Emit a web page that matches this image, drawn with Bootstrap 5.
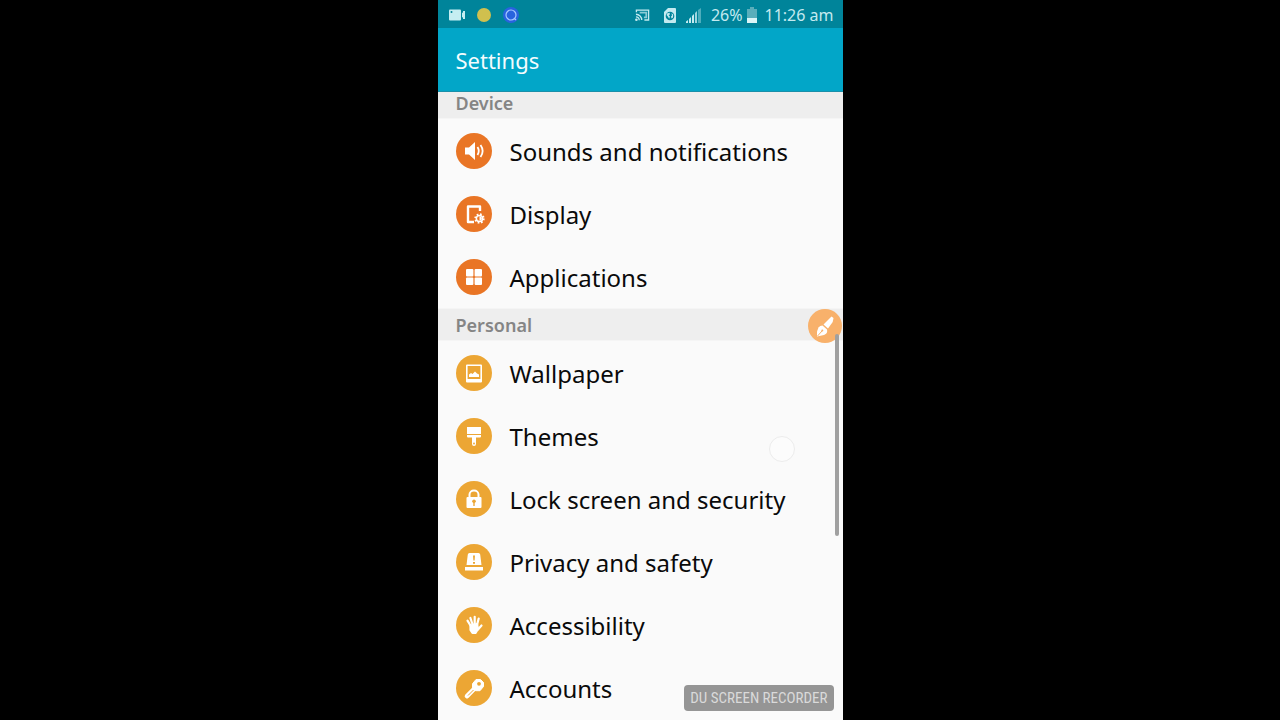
<!DOCTYPE html>
<html lang="en">
<head>
<meta charset="utf-8">
<meta name="viewport" content="width=device-width, initial-scale=1">
<title>Settings</title>
<link href="https://cdn.jsdelivr.net/npm/bootstrap@5.3.0/dist/css/bootstrap.min.css" rel="stylesheet">
<style>
  body { background: #000; font-family: "Noto Sans", "Open Sans", sans-serif; }
  .phone { height: 100vh; aspect-ratio: 9 / 16; max-width: 100%; background: #fafafa; }
  .status-bar { height: 28px; background: #00849a; color: #c4eaf0; font-size: 16px; line-height: 28px; padding: 2px 9px 0 10px; }
  .status-bar svg { flex: none; }
  .system-icons { gap: 10px; }
  .title-bar { height: 64px; background: #02a6c8; border-bottom: 1px solid #1a90aa; padding: 0 18px; }
  .title-bar h1 { font-size: 22px; line-height: 28px; color: #f4fcfe; font-weight: 400; }
  .section-title { height: 33px; background: #eee; border: solid #f5f5f5; border-width: 1px 0; color: #858585; font-size: 18px; line-height: 32px; font-weight: 600; padding: 0 18px; margin: 0; }
  .section-title.scrolled { height: 27px; line-height: 22px; border-top: 0; }
  .setting { height: 63px; gap: 18px; padding: 0 18px; color: #0a0a0a; font-size: 24px; line-height: 32px; background: transparent; }
  .setting span { padding-top: 2px; }
  .setting svg { flex: none; width: 36px; height: 36px; border-radius: 50%; background: #eca634; color: #eca634; }
  .device .setting svg { background: #e97525; color: #e97525; }
  .brush-button { top: 309px; right: 1px; width: 34px; height: 34px; background: #f8b16b; }
  .scroll-thumb { top: 334px; right: 4px; width: 4px; height: 202px; border-radius: 2px; background: #a0a0a0; }
  .touch-dot { top: 436px; right: 48px; width: 26px; height: 26px; border: 1px solid #ececec; background: #fcfcfc; }
  .recorder-tag { right: 9px; bottom: 9px; height: 26px; border-radius: 4px; background: #959595; color: #dadada; font: 15px/27px "Roboto Condensed", "Liberation Sans Narrow", sans-serif; padding: 0 6px; }
</style>
</head>
<body>
<main class="phone position-relative mx-auto overflow-hidden">
  <div class="status-bar d-flex align-items-center">
    <svg width="18" height="14" viewBox="0 0 18 14" fill="#c6eef2"><rect x="1" y="1.500" width="12" height="11" rx="1"/><path d="M14 5l1.500-1v6L14 9zM15 3h2v8h-2z"/><circle cx="3.500" cy="4" r="1" fill="#00849a"/></svg>
    <svg class="ms-2" width="20" height="16" viewBox="0 0 20 16"><circle cx="10" cy="8" r="7" fill="#d0c04e"/></svg>
    <svg class="ms-2" width="18" height="18" viewBox="0 0 18 18"><circle cx="9" cy="9" r="8" fill="#2863de"/><circle cx="9" cy="9" r="5" fill="none" stroke="#a5c8ff" stroke-width="1.2"/><path d="M12.2 12.2l1.8 1.8" stroke="#a5c8ff" stroke-width="1.3"/></svg>
    <div class="system-icons ms-auto d-flex align-items-center">
      <svg class="me-1" width="15" height="14" viewBox="0 0 16 14" fill="none" stroke="#c4eaf0" stroke-width="1.4"><path d="M1.500 4V1.700h13v10.600H10"/><path d="M1 6.200a6.200 6.200 0 0 1 6.200 6.200M1 9a3.500 3.500 0 0 1 3.500 3.500"/><path d="M5 4.500h7v5H9.500" stroke-width="1.800" opacity=".7"/><circle cx="1.500" cy="12" r=".7" fill="#c4eaf0"/></svg>
      <svg width="12" height="15" viewBox="0 0 12 15"><path d="M4 0h7a1 1 0 0 1 1 1v13a1 1 0 0 1-1 1H1a1 1 0 0 1-1-1V4z" fill="#c4eaf0"/><circle cx="6" cy="8" r="4.300" fill="#00849a"/><path d="M3 5.500l2.500-.8.5 1.500-1.300 1 1.300 1.300-.8 2.200-1.200-2L2.600 7zM7.500 5.200l1.700 1.200-.2 3-1.500 1-.5-2 1-1z" fill="#c4eaf0"/></svg>
      <svg width="15" height="15" viewBox="0 0 15 15" fill="#c4eaf0"><path d="M0 13.500L2 12v3H0zM3 11L5 9v6H3zM6 8l2-2v9H6z"/><path d="M9 5l2-2v12H9z" opacity=".8"/><path d="M12 2l3-2v15h-3z" opacity=".4"/></svg>
      <span>26%</span>
    </div>
    <svg class="ms-1" width="10" height="16" viewBox="0 0 10 16"><path d="M3 0h4v2h3v14H0V2h3z" fill="#5aaebb"/><path d="M0 11h10v5H0z" fill="#dcf5f7"/></svg>
    <time class="ms-2">11:26 am</time>
  </div>

  <header class="title-bar d-flex align-items-center"><h1 class="m-0">Settings</h1></header>

  <section class="device">
    <h2 class="section-title scrolled">Device</h2>
    <nav class="list-group list-group-flush">
      <a href="#sounds" class="setting d-flex align-items-center text-decoration-none">
        <svg viewBox="0 0 36 36" fill="#fff"><path d="M9 14.500h4l6-5.500v18l-6-5.500H9z"/><path d="M21.500 14q2.500 4 0 8M24.500 12q4.300 6 0 12" fill="none" stroke="#fff" stroke-width="1.800"/></svg>
        <span>Sounds and notifications</span></a>
      <a href="#display" class="setting d-flex align-items-center text-decoration-none">
        <svg viewBox="0 0 36 36" fill="none"><path d="M24 15v-4.500H12V26h6" stroke="#fff" stroke-width="2.400" stroke-linejoin="round"/><circle cx="23.500" cy="22.500" r="4.200" stroke="#fff" stroke-width="2" stroke-dasharray="1.650"/><circle cx="23.500" cy="22.500" r="3.100" stroke="#fff" stroke-width="1.500"/><path d="M23.500 20.200a2.300 2.300 0 0 1 0 4.600z" fill="#fff"/></svg>
        <span>Display</span></a>
      <a href="#applications" class="setting d-flex align-items-center text-decoration-none">
        <svg viewBox="0 0 36 36" fill="#fff"><rect x="10" y="10" width="7.400" height="7.400" rx="1"/><rect x="18.600" y="10" width="7.400" height="7.400" rx="1"/><rect x="10" y="18.600" width="7.400" height="7.400" rx="1"/><rect x="18.600" y="18.600" width="7.400" height="7.400" rx="1"/></svg>
        <span>Applications</span></a>
    </nav>
  </section>

  <section>
    <h2 class="section-title">Personal</h2>
    <nav class="list-group list-group-flush">
      <a href="#wallpaper" class="setting d-flex align-items-center text-decoration-none">
        <svg viewBox="0 0 36 36" fill="#fff"><path fill-rule="evenodd" d="M11 9.500h14q1 0 1 1v16q0 1-1 1H11q-1 0-1-1v-16q0-1 1-1zm.6 1.600v13h12.800v-13z"/><path d="M13 22v-2.500l2-1.500 1.500 1 2.500-2.500 2 2 2 1V22z"/></svg>
        <span>Wallpaper</span></a>
      <a href="#themes" class="setting d-flex align-items-center text-decoration-none">
        <svg viewBox="0 0 36 36" fill="#fff"><path d="M11 9h14v7H11zM11 17h14v1.500q0 1-1 1h-4V26q0 2-2 2t-2-2v-6.500h-4q-1 0-1-1z"/><circle cx="18" cy="25.500" r=".9" fill="currentColor"/></svg>
        <span>Themes</span></a>
      <a href="#security" class="setting d-flex align-items-center text-decoration-none">
        <svg viewBox="0 0 36 36"><rect x="10.500" y="16" width="15" height="11" rx="1" fill="#fff"/><path d="M13.500 17v-3.500a4.500 4 0 0 1 9 0V17" fill="none" stroke="#fff" stroke-width="2"/><circle cx="18" cy="20.300" r="1.800" fill="currentColor"/><path d="M17.300 21h1.400v4h-1.400z" fill="currentColor"/></svg>
        <span>Lock screen and security</span></a>
      <a href="#privacy" class="setting d-flex align-items-center text-decoration-none">
        <svg viewBox="0 0 36 36" fill="#fff"><path d="M13.500 9h9q1.500 0 1.700 1.500L25.500 21h-15l1.300-10.500Q12 9 13.500 9zM9 23h18v3.500H9z"/><path d="M17 11.500h2l-.4 5h-1.200zM17 18h2v1.800h-2z" fill="currentColor"/></svg>
        <span>Privacy and safety</span></a>
      <a href="#accessibility" class="setting d-flex align-items-center text-decoration-none">
        <svg viewBox="0 0 36 36" fill="none" stroke="#fff" stroke-width="2.200" stroke-linecap="round"><path d="M14.800 19l-3.300-5.300M16.400 17l-2-6M18.700 17V9.800M21 18l1.700-6.500M22 22.500l3.500-4"/><path d="M14.500 18.500l6.500-1.500 1 5-2.500 4h-3l-2-3z" fill="#fff" stroke-linejoin="round"/></svg>
        <span>Accessibility</span></a>
      <a href="#accounts" class="setting d-flex align-items-center text-decoration-none">
        <svg viewBox="0 0 36 36"><path d="M19 18l-8 8.200" stroke="#fff" stroke-width="4.600" stroke-linecap="round"/><path d="M20 9.500h4.500l3 3v4l-3.500 4.200h-4.500l-3-3v-4z" fill="#fff" stroke="#fff" stroke-linejoin="round"/><circle cx="23" cy="13.800" r="1.900" fill="currentColor"/><path d="M17.500 20l-5.500 5.500" stroke="currentColor" stroke-width="1"/></svg>
        <span>Accounts</span></a>
    </nav>
  </section>

  <div class="touch-dot position-absolute rounded-circle"></div>
  <button type="button" class="brush-button position-absolute rounded-circle border-0 p-0 d-flex" aria-label="Draw on screen">
    <svg width="34" height="34" viewBox="0 0 34 34" fill="#fff"><path d="M23.500 7.500l2 1.500-.8 4-4.700 6.500-4.500-4z"/><path d="M14.500 16.500l4.500 4q1 4-3 5.500l-7 1.500v-5l1.500-4q1.500-2 4-2z"/><path d="M9.500 27l4.500-5" stroke="#f8b16b" stroke-width="1"/><circle cx="14.300" cy="21.500" r="1" fill="#f8b16b"/></svg>
  </button>
  <div class="scroll-thumb position-absolute"></div>
  <div class="recorder-tag position-absolute text-nowrap">DU SCREEN RECORDER</div>
</main>
<script src="https://cdn.jsdelivr.net/npm/bootstrap@5.3.0/dist/js/bootstrap.bundle.min.js"></script>
</body>
</html>
